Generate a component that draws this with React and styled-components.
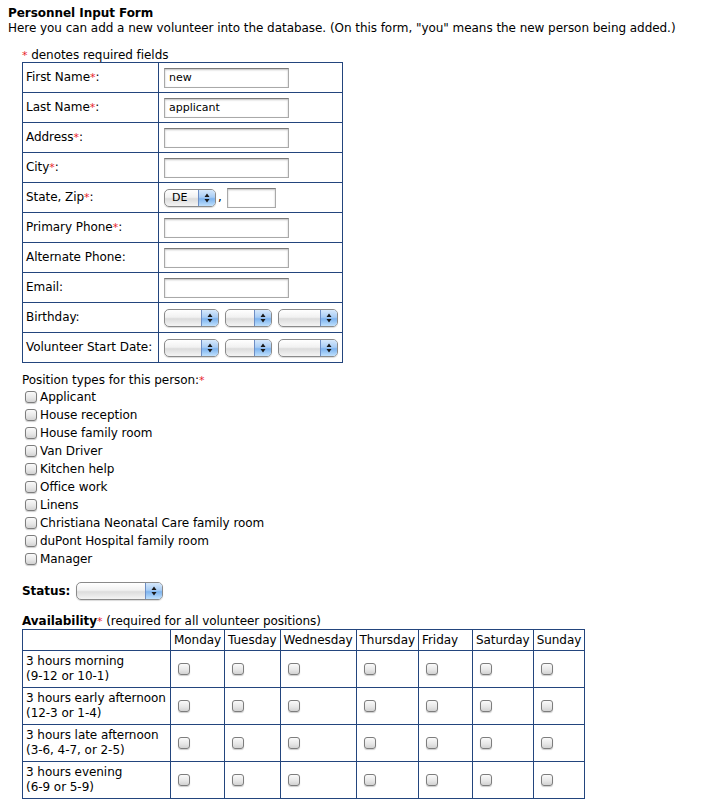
import React from "react";
import styled, { createGlobalStyle } from "styled-components";

const GlobalStyle = createGlobalStyle`
  body {
    margin: 0;
    padding: 6px 8px;
    background: #fff;
    color: #000;
    font-family: Verdana, "DejaVu Sans", sans-serif;
    font-size: 12px;
    line-height: 15px;
    letter-spacing: -0.05px;
  }
`;

const Title = styled.div`
  font-weight: bold;
`;

const Intro = styled.div`
  margin-bottom: 12px;
`;

const Section = styled.div`
  padding-left: 14px;
`;

const Req = styled.span`
  color: #e8232b;
  font-size: 11px;
`;

const FormTable = styled.table`
  border-collapse: collapse;
  margin-top: -1px;
  margin-bottom: 10px;
  td {
    border: 1px solid #23457d;
    height: 29px;
    padding: 0 3px;
    vertical-align: middle;
    white-space: nowrap;
  }
  td:first-child {
    width: 129px;
  }
  td:last-child {
    width: 175px;
    padding-left: 5px;
  }
`;

const TextInput = styled.input`
  box-sizing: border-box;
  width: ${(p) => p.$w || 125}px;
  height: 20px;
  border: 1px solid #a9a9a9;
  border-top-color: #7a7a7a;
  box-shadow: inset 0 1px 2px rgba(0, 0, 0, 0.25);
  font-family: inherit;
  font-size: 11px;
  padding: 0 4px;
  vertical-align: middle;
  margin: 0;
`;

const SelectBox = styled.span`
  display: inline-flex;
  box-sizing: border-box;
  width: ${(p) => p.$w}px;
  height: 18px;
  margin-right: ${(p) => p.$mr || 0}px;
  border: 1px solid #8a8a8a;
  border-radius: 5px;
  overflow: hidden;
  vertical-align: middle;
  background: linear-gradient(#ffffff, #f1f1f1 45%, #dcdcdc 55%, #f4f4f4);
  box-shadow: 0 1px 1px rgba(0, 0, 0, 0.15);
`;

const SelectText = styled.span`
  flex: 1;
  font-size: 11px;
  line-height: 16px;
  padding-left: 7px;
`;

const SelectArrow = styled.span`
  width: 16px;
  display: flex;
  align-items: center;
  justify-content: center;
  border-left: 1px solid #6d8ec4;
  background: linear-gradient(#d6e8fb, #a9cdf5 45%, #7db3ee 55%, #bfe0fd);
`;

const Arrows = () => (
  <svg width="6" height="10" viewBox="0 0 6 10">
    <path d="M3 0.5 L5.5 4 L0.5 4 Z M3 9.5 L5.5 6 L0.5 6 Z" fill="#1a1a1a" />
  </svg>
);

const Select = ({ w, mr, value }) => (
  <SelectBox $w={w} $mr={mr}>
    <SelectText>{value}</SelectText>
    <SelectArrow>
      <Arrows />
    </SelectArrow>
  </SelectBox>
);

const Comma = styled.span`
  margin: 0 5px 0 2px;
  vertical-align: middle;
`;

const Check = styled.input.attrs({ type: "checkbox" })`
  appearance: none;
  -webkit-appearance: none;
  box-sizing: border-box;
  width: 12px;
  height: 12px;
  margin: 0;
  border: 1px solid #7d7d7d;
  border-radius: 3px;
  background: linear-gradient(#fafafa, #e6e6e6 60%, #d2d2d2);
  box-shadow: 0 1px 1px rgba(0, 0, 0, 0.2);
  vertical-align: middle;
`;

const CheckList = styled.div`
  display: flex;
  flex-direction: column;
  margin-bottom: 13px;
`;

const CheckRow = styled.label`
  display: flex;
  align-items: center;
  gap: 3px;
  height: 18px;
  padding-left: 3px;
`;

const StatusRow = styled.div`
  display: flex;
  align-items: center;
  gap: 6px;
  height: 20px;
  margin-bottom: 13px;
  b {
    font-weight: bold;
  }
`;

const AvailTitle = styled.div`
  line-height: 14px;
  b {
    font-weight: bold;
  }
`;

const AvailTable = styled.table`
  border-collapse: collapse;
  th,
  td {
    border: 1px solid #23457d;
    padding: 0 3px;
    text-align: left;
    vertical-align: middle;
    font-weight: normal;
    white-space: nowrap;
  }
  th {
    height: 20px;
  }
  td {
    height: 36px;
  }
  td.slot {
    padding-left: 7px;
  }
`;

const days = [
  ["Monday", 50],
  ["Tuesday", 55],
  ["Wednesday", 74],
  ["Thursday", 61],
  ["Friday", 54],
  ["Saturday", 60],
  ["Sunday", 51],
];

const slots = [
  ["3 hours morning", "(9-12 or 10-1)"],
  ["3 hours early afternoon", "(12-3 or 1-4)"],
  ["3 hours late afternoon", "(3-6, 4-7, or 2-5)"],
  ["3 hours evening", "(6-9 or 5-9)"],
];

const positions = [
  "Applicant",
  "House reception",
  "House family room",
  "Van Driver",
  "Kitchen help",
  "Office work",
  "Linens",
  "Christiana Neonatal Care family room",
  "duPont Hospital family room",
  "Manager",
];

const DateSelects = () => (
  <>
    <Select w={55} mr={6} />
    <Select w={47} mr={6} />
    <Select w={60} />
  </>
);

export default function App() {
  return (
    <>
      <GlobalStyle />
      <Title>Personnel Input Form</Title>
      <Intro>
        Here you can add a new volunteer into the database. (On this form, "you" means the new person being added.)
      </Intro>
      <Section>
        <div>
          <Req>*</Req> denotes required fields
        </div>
        <FormTable>
          <tbody>
            <tr>
              <td>First Name<Req>*</Req>:</td>
              <td><TextInput defaultValue="new" /></td>
            </tr>
            <tr>
              <td>Last Name<Req>*</Req>:</td>
              <td><TextInput defaultValue="applicant" /></td>
            </tr>
            <tr>
              <td>Address<Req>*</Req>:</td>
              <td><TextInput /></td>
            </tr>
            <tr>
              <td>City<Req>*</Req>:</td>
              <td><TextInput /></td>
            </tr>
            <tr>
              <td>State, Zip<Req>*</Req>:</td>
              <td>
                <Select w={52} value="DE" />
                <Comma>,</Comma>
                <TextInput $w={49} />
              </td>
            </tr>
            <tr>
              <td>Primary Phone<Req>*</Req>:</td>
              <td><TextInput /></td>
            </tr>
            <tr>
              <td>Alternate Phone:</td>
              <td><TextInput /></td>
            </tr>
            <tr>
              <td>Email:</td>
              <td><TextInput /></td>
            </tr>
            <tr>
              <td>Birthday:</td>
              <td><DateSelects /></td>
            </tr>
            <tr>
              <td>Volunteer Start Date:</td>
              <td><DateSelects /></td>
            </tr>
          </tbody>
        </FormTable>

        <div>
          Position types for this person:<Req>*</Req>
        </div>
        <CheckList>
          {positions.map((p) => (
            <CheckRow key={p}>
              <Check />
              {p}
            </CheckRow>
          ))}
        </CheckList>

        <StatusRow>
          <b>Status:</b>
          <Select w={87} />
        </StatusRow>

        <AvailTitle>
          <b>Availability</b>
          <Req>*</Req> (required for all volunteer positions)
        </AvailTitle>
        <AvailTable>
          <thead>
            <tr>
              <th style={{ width: 141 }}></th>
              {days.map(([d, w]) => (
                <th key={d} style={{ width: w - 7 }}>{d}</th>
              ))}
            </tr>
          </thead>
          <tbody>
            {slots.map(([a, b]) => (
              <tr key={a}>
                <td>
                  {a}
                  <br />
                  {b}
                </td>
                {days.map(([d]) => (
                  <td key={d} className="slot">
                    <Check />
                  </td>
                ))}
              </tr>
            ))}
          </tbody>
        </AvailTable>
      </Section>
    </>
  );
}
